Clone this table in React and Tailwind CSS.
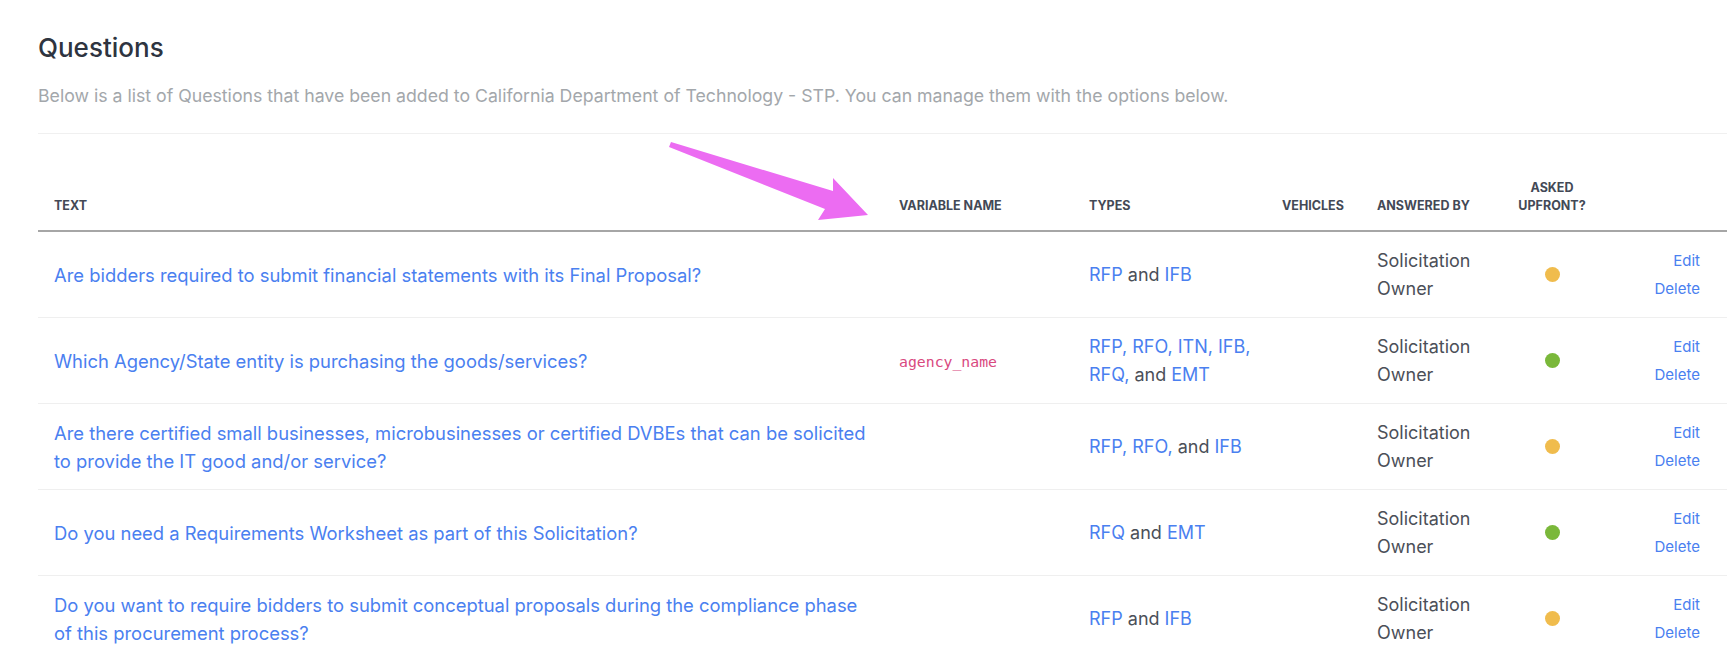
import React from "react";

const FONT = { fontFamily: "Inter, 'Noto Sans', sans-serif" };

const questions = [
  {
    text: "Are bidders required to submit financial statements with its Final Proposal?",
    variable: "",
    types: ["RFP", "IFB"],
    upfront: "yellow",
  },
  {
    text: "Which Agency/State entity is purchasing the goods/services?",
    variable: "agency_name",
    types: ["RFP", "RFO", "ITN", "IFB", "RFQ", "EMT"],
    upfront: "green",
  },
  {
    text: "Are there certified small businesses, microbusinesses or certified DVBEs that can be solicited to provide the IT good and/or service?",
    variable: "",
    types: ["RFP", "RFO", "IFB"],
    upfront: "yellow",
  },
  {
    text: "Do you need a Requirements Worksheet as part of this Solicitation?",
    variable: "",
    types: ["RFQ", "EMT"],
    upfront: "green",
  },
  {
    text: "Do you want to require bidders to submit conceptual proposals during the compliance phase of this procurement process?",
    variable: "",
    types: ["RFP", "IFB"],
    upfront: "yellow",
  },
];

function TypeList({ types }) {
  // "A and B" / "A, B, and C"
  return (
    <span>
      {types.map((t, i) => {
        const last = i === types.length - 1;
        const comma = !last && types.length > 2 ? "," : "";
        return (
          <React.Fragment key={t}>
            {last && i > 0 ? <span className="text-[#4b4f58]">and </span> : null}
            <a className="text-[#4a80f0]">
              {t}
              {comma}
            </a>
            {!last ? " " : null}
          </React.Fragment>
        );
      })}
    </span>
  );
}

export default function App() {
  return (
    <div className="relative bg-white min-h-[652px] pl-[38px] pr-[5px] pt-[31px]" style={FONT}>
      <h1 className="text-[26px] leading-[34px] font-medium text-[#2e3440]">Questions</h1>
      <p className="mt-[19px] text-[17.7px] leading-[24px] text-[#a3a7ab]">
        Below is a list of Questions that have been added to California Department of Technology - STP. You can manage them with the options below.
      </p>
      <div className="mt-[25px] border-t border-[#f0f0f0]" />

      <table className="mt-[45px] w-full table-fixed border-collapse">
        <colgroup>
          <col className="w-[845px]" />
          <col className="w-[190px]" />
          <col className="w-[193px]" />
          <col className="w-[95px]" />
          <col className="w-[140px]" />
          <col className="w-[102px]" />
          <col />
        </colgroup>
        <thead>
          <tr className="border-b-2 border-[#a6a6a6] text-[12.5px] leading-[18px] font-bold uppercase text-[#434956]">
            <th className="px-4 pt-[11px] pb-[15px] text-left align-bottom">Text</th>
            <th className="px-4 pb-[15px] text-left align-bottom">Variable Name</th>
            <th className="px-4 pb-[15px] text-left align-bottom">Types</th>
            <th className="px-4 pb-[15px] text-left align-bottom">Vehicles</th>
            <th className="px-4 pb-[15px] text-left align-bottom">Answered By</th>
            <th className="px-2 pb-[15px] text-center align-bottom">Asked<br />Upfront?</th>
            <th className="pb-[15px]" />
          </tr>
        </thead>
        <tbody>
          {questions.map((q) => (
            <tr key={q.text} className="border-b border-[#efefef] text-[18.4px] leading-[28px]">
              <td className="pl-4 pr-[11px] py-[14.5px] align-middle">
                <a className="text-[#4a80f0]">{q.text}</a>
              </td>
              <td className="px-4 py-[14.5px] align-middle">
                {q.variable ? (
                  <code className="text-[14.8px] text-[#d9497f]" style={{ fontFamily: "'DejaVu Sans Mono', monospace" }}>
                    {q.variable}
                  </code>
                ) : null}
              </td>
              <td className="pl-4 pr-0 py-[14.5px] align-middle text-[18px]">
                <TypeList types={q.types} />
              </td>
              <td className="px-4 py-[14.5px]" />
              <td className="px-4 py-[14.5px] align-middle text-[18px] text-[#4b4f58]">Solicitation Owner</td>
              <td className="py-[14.5px] align-middle">
                <div className="flex justify-center">
                  <span className={q.upfront === "green" ? "block h-[15px] w-[15px] rounded-full bg-[#7ab83a]" : "block h-[15px] w-[15px] rounded-full bg-[#f0bc4d]"} />
                </div>
              </td>
              <td className="pr-[27px] py-[14.5px] align-middle text-right text-[15px] leading-[28px]">
                <div className="text-[#4a80f0]">Edit</div>
                <div className="text-[#4a80f0]">Delete</div>
              </td>
            </tr>
          ))}
        </tbody>
      </table>

      <svg className="absolute left-0 top-0 pointer-events-none" width="1732" height="652">
        <polygon
          points="671,142 833,191 833,178 868,215 818,220 825,209 669,147"
          fill="#ec6cf2"
        />
      </svg>
    </div>
  );
}
